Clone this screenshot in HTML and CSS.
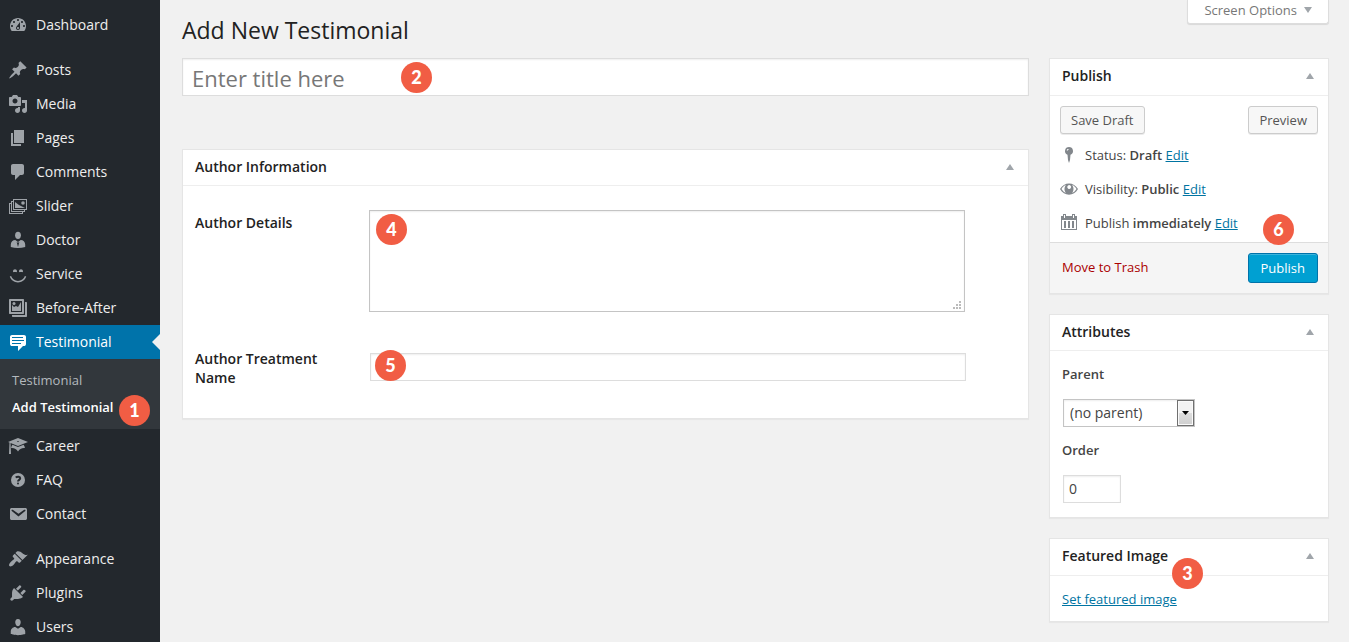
FILE: index.html
```html
<!DOCTYPE html>
<html lang="en">
<head>
<meta charset="utf-8">
<title>Add New Testimonial</title>
<link rel="stylesheet" href="styles.css">
</head>
<body>
<div class="layout">
  <nav class="menu">
    <a class="menu-item" href="#"><svg class="icon" viewBox="0 0 20 20"><path fill-rule="evenodd" d="M3.76 16h12.48c1.1-1.37 1.76-3.11 1.76-5 0-4.42-3.58-8-8-8s-8 3.58-8 8c0 1.89.66 3.63 1.76 5zM10 4c.55 0 1 .45 1 1s-.45 1-1 1-1-.45-1-1 .45-1 1-1zM6 6c.55 0 1 .45 1 1s-.45 1-1 1-1-.45-1-1 .45-1 1-1zm8 0c.55 0 1 .45 1 1s-.45 1-1 1-1-.45-1-1 .45-1 1-1zm-5.37 5.55L12 7v6c0 1.1-.9 2-2 2s-2-.9-2-2c0-.57.24-1.08.63-1.45zM4 10c.55 0 1 .45 1 1s-.45 1-1 1-1-.45-1-1 .45-1 1-1zm12 0c.55 0 1 .45 1 1s-.45 1-1 1-1-.45-1-1 .45-1 1-1zm-5 3c0-.55-.45-1-1-1s-1 .45-1 1 .45 1 1 1 1-.45 1-1z"/></svg>Dashboard</a>
    <div class="menu-gap"></div>
    <a class="menu-item" href="#"><svg class="icon" viewBox="0 0 20 20"><path d="M10.44 3.02l1.82-1.82 6.36 6.35-1.83 1.82c-1.05-.68-2.48-.57-3.41.36l-.75.75c-.92.93-1.04 2.35-.35 3.41l-1.83 1.82-2.41-2.41-2.8 2.79c-.42.42-3.38 2.71-3.8 2.29s1.86-3.39 2.28-3.81l2.79-2.79L4.1 9.36l1.83-1.82c1.05.69 2.48.57 3.4-.36l.75-.75c.93-.92 1.05-2.35.36-3.41z"/></svg>Posts</a>
    <a class="menu-item" href="#"><svg class="icon" viewBox="0 0 20 20"><path fill-rule="evenodd" d="M13 11V4c0-.55-.45-1-1-1h-1.67L9 1H5L3.67 3H2c-.55 0-1 .45-1 1v7c0 .55.45 1 1 1h10c.55 0 1-.45 1-1zM7 4.5c1.38 0 2.5 1.12 2.5 2.5S8.38 9.500 7 9.500 4.500 8.380 4.500 7 5.620 4.500 7 4.500zM14 6h5v10.500c0 1.380-1.120 2.500-2.500 2.500S14 17.880 14 16.500s1.120-2.500 2.500-2.500c.17 0 .34.02.5.05V9h-3V6zm-4 8.050V13h2v3.500c0 1.380-1.120 2.500-2.500 2.500S7 17.880 7 16.500 8.120 14 9.500 14c.17 0 .34.02.5.05z"/></svg>Media</a>
    <a class="menu-item" href="#"><svg class="icon" viewBox="0 0 20 20"><path d="M6 15V2h10v13H6zm-1 1h8v2H3V5h2v11z"/></svg>Pages</a>
    <a class="menu-item" href="#"><svg class="icon" viewBox="0 0 20 20"><path d="M5 2h9c1.100 0 2 .9 2 2v7c0 1.100-.9 2-2 2h-2l-5 5v-5H5c-1.100 0-2-.9-2-2V4c0-1.100.9-2 2-2z"/></svg>Comments</a>
    <a class="menu-item" href="#"><svg class="icon" viewBox="0 0 20 20"><path fill-rule="evenodd" d="M5 3h14v11h-2v2h-2v2H1V7h2V5h2zM6 4v9h12V4zM4 6v9h12v-1H5V6zM2 8v9h12v-1H3V8z"/><path d="M7 12V6l4 3 2 1 4 2z"/><circle cx="15" cy="7" r="1.800"/></svg>Slider</a>
    <a class="menu-item" href="#"><svg class="icon" viewBox="0 0 20 20"><ellipse cx="10" cy="5.300" rx="2.900" ry="3.600"/><path fill-rule="evenodd" d="M7.300 10 10 12l2.700-2c2.500 0 4.500 2 4.500 4.500V17c-4.500 1.400-10 1.400-14.400 0v-2.500C2.800 12 4.800 10 7.300 10zM8.700 12 10 17l1.300-5L10 12.800z"/></svg>Doctor</a>
    <a class="menu-item" href="#"><svg class="icon" viewBox="0 0 20 20"><path d="M7 5.200c1.100 0 2 .89 2 2 0 .37-.11.71-.28 1C8.720 8.200 8 8 7 8s-1.720.2-1.720.2c-.17-.29-.28-.63-.28-1 0-1.110.9-2 2-2zm6 0c1.110 0 2 .89 2 2 0 .37-.11.71-.28 1 0 0-.72-.2-1.720-.2s-1.720.2-1.720.2c-.17-.29-.28-.63-.28-1 0-1.110.89-2 2-2zm-3 13.200c3.720 0 7.030-2.360 8.230-5.880l-1.320-.46C15.900 15.020 13.120 17 10 17s-5.900-1.980-6.910-4.940l-1.320.46c1.200 3.520 4.510 5.880 8.230 5.880z"/></svg>Service</a>
    <a class="menu-item" href="#"><svg class="icon" viewBox="0 0 20 20"><path fill-rule="evenodd" d="M2 1h13c.6 0 1 .4 1 1v13c0 .6-.4 1-1 1H2c-.6 0-1-.4-1-1V2c0-.6.400-1 1-1zm1 2v11h11V3zM17 4h1c.6 0 1 .4 1 1v13c0 .6-.4 1-1 1H5c-.6 0-1-.4-1-1v-1h13z"/><path d="M4 7l2 2 2-1 2 1 3-5v9H4z"/><circle cx="6" cy="5.500" r="1.500"/></svg>Before-After</a>
    <a class="menu-item current" href="#"><svg class="icon" viewBox="0 0 20 20"><path fill-rule="evenodd" d="M4 3h12c.55 0 1.020.2 1.410.59S18 4.450 18 5v7c0 .55-.2 1.020-.59 1.410S16.550 14 16 14h-1l-5 5v-5H4c-.55 0-1.020-.2-1.410-.59S2 12.550 2 12V5c0-.55.2-1.020.59-1.410S3.450 3 4 3zm11 2H4v1h11V5zm1 3H4v1h12V8zm-3 3H4v1h9v-1z"/></svg>Testimonial</a>
    <div class="submenu">
      <a class="submenu-item" href="#">Testimonial</a>
      <a class="submenu-item active" href="#">Add Testimonial</a>
      <span class="badge badge-menu">1</span>
    </div>
    <a class="menu-item" href="#"><svg class="icon" viewBox="0 0 20 20"><path fill-rule="evenodd" d="M10 10L2.540 7.020 3 18H1l.48-11.410L0 6l10-4 10 4zm0-5c-.55 0-1 .22-1 .5s.45.5 1 .5 1-.22 1-.5-.45-.5-1-.5zm0 6l5.570-2.230c.71.94 1.200 2.070 1.360 3.300-.3-.04-.61-.07-.93-.07-2.550 0-4.780 1.370-6 3.410C8.780 13.370 6.550 12 4 12c-.32 0-.63.03-.93.07.16-1.230.65-2.360 1.360-3.300z"/></svg>Career</a>
    <a class="menu-item" href="#"><svg class="icon" viewBox="0 0 20 20"><circle cx="10" cy="10" r="7"/><path class="cut-line" d="M7.700 7.500c1.600-1.300 4.500-1.200 4.500.8 0 1.500-2.200 1.600-2.200 3.200"/><circle class="cut" cx="10" cy="13.500" r="1"/></svg>FAQ</a>
    <a class="menu-item" href="#"><svg class="icon" viewBox="0 0 20 20"><path fill-rule="evenodd" d="M3.870 4h13.250C18.370 4 19 4.590 19 5.790v8.420c0 1.190-.63 1.790-1.880 1.790H3.870c-1.250 0-1.880-.6-1.880-1.790V5.790c0-1.200.63-1.790 1.880-1.790zm6.620 8.600l6.740-5.530c.24-.2.43-.66.13-1.070-.29-.41-.82-.42-1.170-.17l-5.700 3.860L4.800 5.830c-.35-.25-.88-.24-1.170.17-.3.41-.11.87.13 1.070z"/></svg>Contact</a>
    <div class="menu-gap"></div>
    <a class="menu-item" href="#"><svg class="icon" viewBox="0 0 20 20"><path d="M14.480 11.060L7.410 3.990l1.500-1.500c.5-.56 2.300-.47 3.510.32 1.210.8 1.430 1.280 2.910 2.100 1.180.64 2.450 1.260 4.450.85zm-.71.71L6.700 4.700 4.930 6.470c-.39.39-.39 1.020 0 1.410l1.060 1.060c.39.39.39 1.030 0 1.420-.6.6-1.430 1.110-2.210 1.690-.35.26-.7.53-1.010.84C1.430 14.230.4 16.080 1.400 17.070c.99 1 2.840-.03 4.180-1.360.31-.31.58-.66.85-1.020.57-.78 1.080-1.610 1.690-2.210.39-.39 1.020-.39 1.410 0l1.060 1.060c.39.39 1.020.39 1.410 0z"/></svg>Appearance</a>
    <a class="menu-item" href="#"><svg class="icon" viewBox="0 0 20 20"><path d="M13.110 4.360L9.870 7.600 8 5.730l3.240-3.240c.35-.34 1.050-.2 1.560.32.52.51.66 1.210.31 1.550zm-8 1.770l.91-1.120 9.010 9.010-1.190.84c-.71.71-2.630 1.160-3.820 1.160H6.140L4.900 17.260c-.59.59-1.540.59-2.120 0-.59-.58-.59-1.530 0-2.120l1.240-1.240v-3.880c0-1.130.4-3.190 1.090-3.890zm7.260 3.970l3.240-3.240c.34-.35 1.040-.21 1.550.31.52.51.66 1.210.31 1.550l-3.240 3.250z"/></svg>Plugins</a>
    <a class="menu-item" href="#"><svg class="icon" viewBox="0 0 20 20"><path d="M10 9.250c-2.270 0-2.730-3.440-2.730-3.440C7 4.020 7.820 2 9.970 2c2.160 0 2.980 2.020 2.710 3.810 0 0-.41 3.440-2.680 3.440zm0 2.570L12.720 10c2.390 0 4.520 2.330 4.520 4.530v2.490s-3.650 1.130-7.240 1.130c-3.650 0-7.240-1.130-7.240-1.130v-2.490c0-2.250 1.940-4.480 4.470-4.480z"/></svg>Users</a>
  </nav>

  <main class="content">
    <header class="page-head">
      <h1>Add New Testimonial</h1>
      <button class="screen-options" type="button">Screen Options<svg class="tri" viewBox="0 0 8 6"><path d="M0 0h8L4 6z"/></svg></button>
    </header>
    <form class="columns">
      <div class="primary">
        <div class="title-wrap">
          <input class="title-input" type="text" placeholder="Enter title here" aria-label="Title">
          <span class="badge badge-title">2</span>
        </div>
        <section class="box">
          <div class="box-head"><h2>Author Information</h2><svg class="tri" viewBox="0 0 8 6"><path d="M0 6h8L4 0z"/></svg></div>
          <div class="fields">
            <label for="details">Author Details</label>
            <div class="field">
              <textarea id="details" class="details"></textarea>
              <svg class="grip" viewBox="0 0 8 8"><path d="M0 6h2v2H0zM3 6h2v2H3zM6 6h2v2H6zM3 3h2v2H3zM6 3h2v2H6zM6 0h2v2H6z"/></svg>
              <span class="badge badge-details">4</span>
            </div>
            <label for="treatment">Author Treatment Name</label>
            <div class="field">
              <input id="treatment" class="text-input treatment" type="text">
              <span class="badge badge-treatment">5</span>
            </div>
          </div>
        </section>
      </div>

      <aside class="side">
        <section class="box publish">
          <div class="box-head tall"><h2>Publish</h2><svg class="tri" viewBox="0 0 8 6"><path d="M0 6h8L4 0z"/></svg></div>
          <div class="actions"><button class="btn" type="button">Save Draft</button><button class="btn" type="button">Preview</button></div>
          <div class="status-list">
            <div class="status"><svg class="icon" viewBox="0 0 20 20"><path fill-rule="evenodd" d="M10 2a4 4 0 0 1 1.500 7.700L11 15l-1 3-1-3-.5-5.300A4 4 0 0 1 10 2zM8.500 4a1.500 1.500 0 0 0-.5 2l2-2z"/></svg><span>Status: <b>Draft</b> <a href="#">Edit</a></span></div>
            <div class="status"><svg class="icon" viewBox="0 0 20 20"><path fill-rule="evenodd" d="M1 10c4-7.500 14-7.500 18 0-4 7.500-14 7.500-18 0zm1.500 0c1.200 2 2.600 3.200 4.300 3.900C5 11.500 5 8.500 6.800 6.100 5.100 6.800 3.700 8 2.500 10zm15 0c-1.200-2-2.600-3.200-4.300-3.900 1.800 2.400 1.800 5.400 0 7.800 1.700-.7 3.100-1.900 4.300-3.900zM9 6.500A1.900 1.900 0 1 0 11.800 9 1.900 1.900 0 0 0 9 6.500z"/></svg><span>Visibility: <b>Public</b> <a href="#">Edit</a></span></div>
            <div class="status"><svg class="icon" viewBox="0 0 20 20"><path fill-rule="evenodd" d="M2 3h2V1h3v2h6V1h3v2h2v14H2zm1 4v9h14V7zM5 8h2v7H5zM9 8h2v7H9zM13 8h2v7h-2zM5 2v3h1V2zM14 2v3h1V2z"/></svg><span>Publish <b>immediately</b> <a href="#">Edit</a></span></div>
          </div>
          <div class="publish-foot"><a class="trash" href="#">Move to Trash</a><button class="btn primary-btn" type="button">Publish</button></div>
          <span class="badge badge-publish">6</span>
        </section>

        <section class="box">
          <div class="box-head"><h2>Attributes</h2><svg class="tri" viewBox="0 0 8 6"><path d="M0 6h8L4 0z"/></svg></div>
          <div class="attributes">
            <label for="parent">Parent</label>
            <div class="select-wrap">
              <select id="parent"><option>(no parent)</option></select>
              <span class="select-arrow"><svg viewBox="0 0 7 4"><path d="M0 0h7L3.500 4z"/></svg></span>
            </div>
            <label for="order">Order</label>
            <input id="order" class="text-input order" type="text" value="0">
          </div>
        </section>

        <section class="box">
          <div class="box-head tall"><h2>Featured Image</h2><svg class="tri" viewBox="0 0 8 6"><path d="M0 6h8L4 0z"/></svg></div>
          <div class="featured"><a href="#">Set featured image</a></div>
          <span class="badge badge-featured">3</span>
        </section>
      </aside>
    </form>
  </main>
</div>
</body>
</html>
```

FILE: styles.css
```css
*, *::before, *::after { box-sizing: border-box; }

body {
  margin: 0;
  background: #f1f1f1;
  color: #444;
  font: 13px/20px "Open Sans", "Noto Sans", sans-serif;
}

a { color: #0074a2; }
h1, h2 { margin: 0; color: #222; }
b { font-weight: 600; }
input, textarea, select, button { margin: 0; font-family: inherit; color: inherit; }

.layout { display: flex; height: 100vh; overflow: hidden; }

/* Sidebar */
.menu { flex: 0 0 160px; padding-top: 8px; background: #23282d; overflow: hidden; }
.menu-item {
  display: flex;
  align-items: center;
  gap: 8px;
  height: 34px;
  padding-left: 8px;
  color: #eee;
  font-size: 14px;
  text-decoration: none;
}
.menu-gap { height: 11px; }
.icon { flex: none; width: 20px; height: 20px; fill: #9ea3a8; }
.cut { fill: #23282d; }
.cut-line { fill: none; stroke: #23282d; stroke-width: 2; }
.current { position: relative; background: #0073aa; color: #fff; }
.current .icon { fill: #fff; }
.current::after {
  content: "";
  position: absolute;
  top: 9px;
  right: 0;
  border: 8px solid transparent;
  border-left: 0;
  border-right-color: #f1f1f1;
}
.submenu { position: relative; padding: 7px 0 9px; background: #32373c; }
.submenu-item {
  display: block;
  padding: 4px 12px 3px;
  color: #b4b9be;
  text-decoration: none;
}
.submenu-item.active { color: #fff; font-weight: 600; }

/* Page */
.content { flex: 1; min-width: 0; padding: 0 20px 0 22px; overflow: hidden; }
.page-head { display: flex; justify-content: space-between; align-items: flex-start; height: 58px; }
h1 { padding-top: 15px; font-size: 23px; line-height: 30px; font-weight: 400; }
.screen-options {
  display: flex;
  align-items: center;
  gap: 7px;
  height: 24px;
  padding: 0 16px 4px;
  border: 1px solid #ddd;
  border-top: 0;
  border-radius: 0 0 3px 3px;
  background: #fff;
  box-shadow: 0 1px 1px rgba(0, 0, 0, .1);
  color: #777;
  font-size: 13px;
}
.tri { flex: none; width: 8px; height: 6px; fill: #a0a5aa; }

.columns { display: grid; grid-template-columns: 1fr 280px; gap: 20px; }
.primary, .side { display: flex; flex-direction: column; gap: 20px; }
.primary { gap: 53px; }

.title-wrap, .field { position: relative; }
.title-input {
  display: block;
  width: 100%;
  height: 38px;
  padding: 1px 9px 0;
  border: 1px solid #ddd;
  background: #fff;
  box-shadow: inset 0 1px 2px rgba(0, 0, 0, .07);
  font-size: 22px;
}
.title-input::placeholder { color: #777; }

.box {
  position: relative;
  border: 1px solid #e5e5e5;
  background: #fff;
  box-shadow: 0 1px 1px rgba(0, 0, 0, .04);
}
.box-head {
  display: flex;
  justify-content: space-between;
  align-items: center;
  height: 36px;
  padding: 0 14px 2px 12px;
  border-bottom: 1px solid #eee;
}
.box-head.tall { height: 37px; }
h2 { font-size: 14px; line-height: 20px; font-weight: 600; }

.fields {
  display: grid;
  grid-template-columns: 134px 1fr;
  gap: 34px 40px;
  padding: 24px 63px 31px 12px;
}
.fields label { padding-top: 3px; color: #222; font-size: 14px; line-height: 19px; font-weight: 600; }
.details {
  display: block;
  width: 100%;
  height: 102px;
  border: 1px solid #c4c4c4;
  box-shadow: inset 0 1px 2px rgba(0, 0, 0, .07);
  resize: none;
}
.grip { position: absolute; right: 4px; bottom: 3px; width: 8px; height: 8px; fill: #bbb; }
.text-input {
  display: block;
  height: 28px;
  padding: 0 5px 1px;
  border: 1px solid #ddd;
  background: #fff;
  box-shadow: inset 0 1px 2px rgba(0, 0, 0, .07);
  font-size: 14px;
}
.treatment { width: 100%; margin: 7px 0 0 1px; }

/* Publish box */
.actions { display: flex; justify-content: space-between; padding: 10px 10px 4px; }
.btn {
  height: 28px;
  padding: 0 10px;
  border: 1px solid #ccc;
  border-radius: 3px;
  background: #f7f7f7;
  box-shadow: 0 1px 0 rgba(0, 0, 0, .08);
  color: #555;
  font-size: 13px;
}
.status-list { padding: 0 9px 2px; }
.status { display: flex; align-items: center; gap: 6px; height: 34px; }
.status .icon { fill: #82878c; }
.publish-foot {
  display: flex;
  justify-content: space-between;
  align-items: center;
  padding: 10px 10px 10px 12px;
  border-top: 1px solid #ddd;
  background: #f5f5f5;
}
.trash { padding-bottom: 2px; color: #a00; text-decoration: none; }
.primary-btn {
  height: 30px;
  padding: 0 12px;
  border-color: #0073aa;
  background: #00a0d2;
  box-shadow: inset 0 1px 0 rgba(120, 200, 230, .5);
  color: #fff;
}

/* Attributes box */
.attributes {
  display: flex;
  flex-direction: column;
  align-items: flex-start;
  padding: 13px 13px 14px;
}
.attributes label { margin-left: -1px; font-weight: 600; }
.select-wrap { position: relative; margin: 15px 0 13px; }
.select-wrap select {
  display: block;
  width: 132px;
  height: 28px;
  padding: 0 6px 1px;
  border: 1px solid #c4c4c4;
  border-radius: 0;
  background: #fff;
  box-shadow: inset 0 1px 2px rgba(0, 0, 0, .07);
  font-size: 14px;
  appearance: none;
}
.select-arrow {
  position: absolute;
  top: 1px;
  right: 1px;
  display: flex;
  align-items: center;
  justify-content: center;
  width: 17px;
  height: 26px;
  border: 1px solid #707070;
  background: linear-gradient(#f2f2f2 50%, #ddd 50%, #cfcfcf);
  box-shadow: inset 0 0 0 1px #fafafa;
  pointer-events: none;
}
.select-arrow svg { width: 7px; height: 4px; }
.order { width: 58px; margin-top: 15px; }

.featured { padding: 13px 12px 12px; }

/* Numbered markers */
.badge {
  position: absolute;
  width: 31px;
  height: 31px;
  border-radius: 50%;
  background: #f15d44;
  color: #fff;
  font: 900 18px/31px Lato, sans-serif;
  text-align: center;
}
.badge-menu { top: 36px; left: 119px; }
.badge-title { top: 4px; left: 219px; }
.badge-details { top: 4px; left: 7px; }
.badge-treatment { top: 4px; left: 6px; }
.badge-publish { top: 155px; right: 34px; }
.badge-featured { top: 19px; left: 122px; }
```
